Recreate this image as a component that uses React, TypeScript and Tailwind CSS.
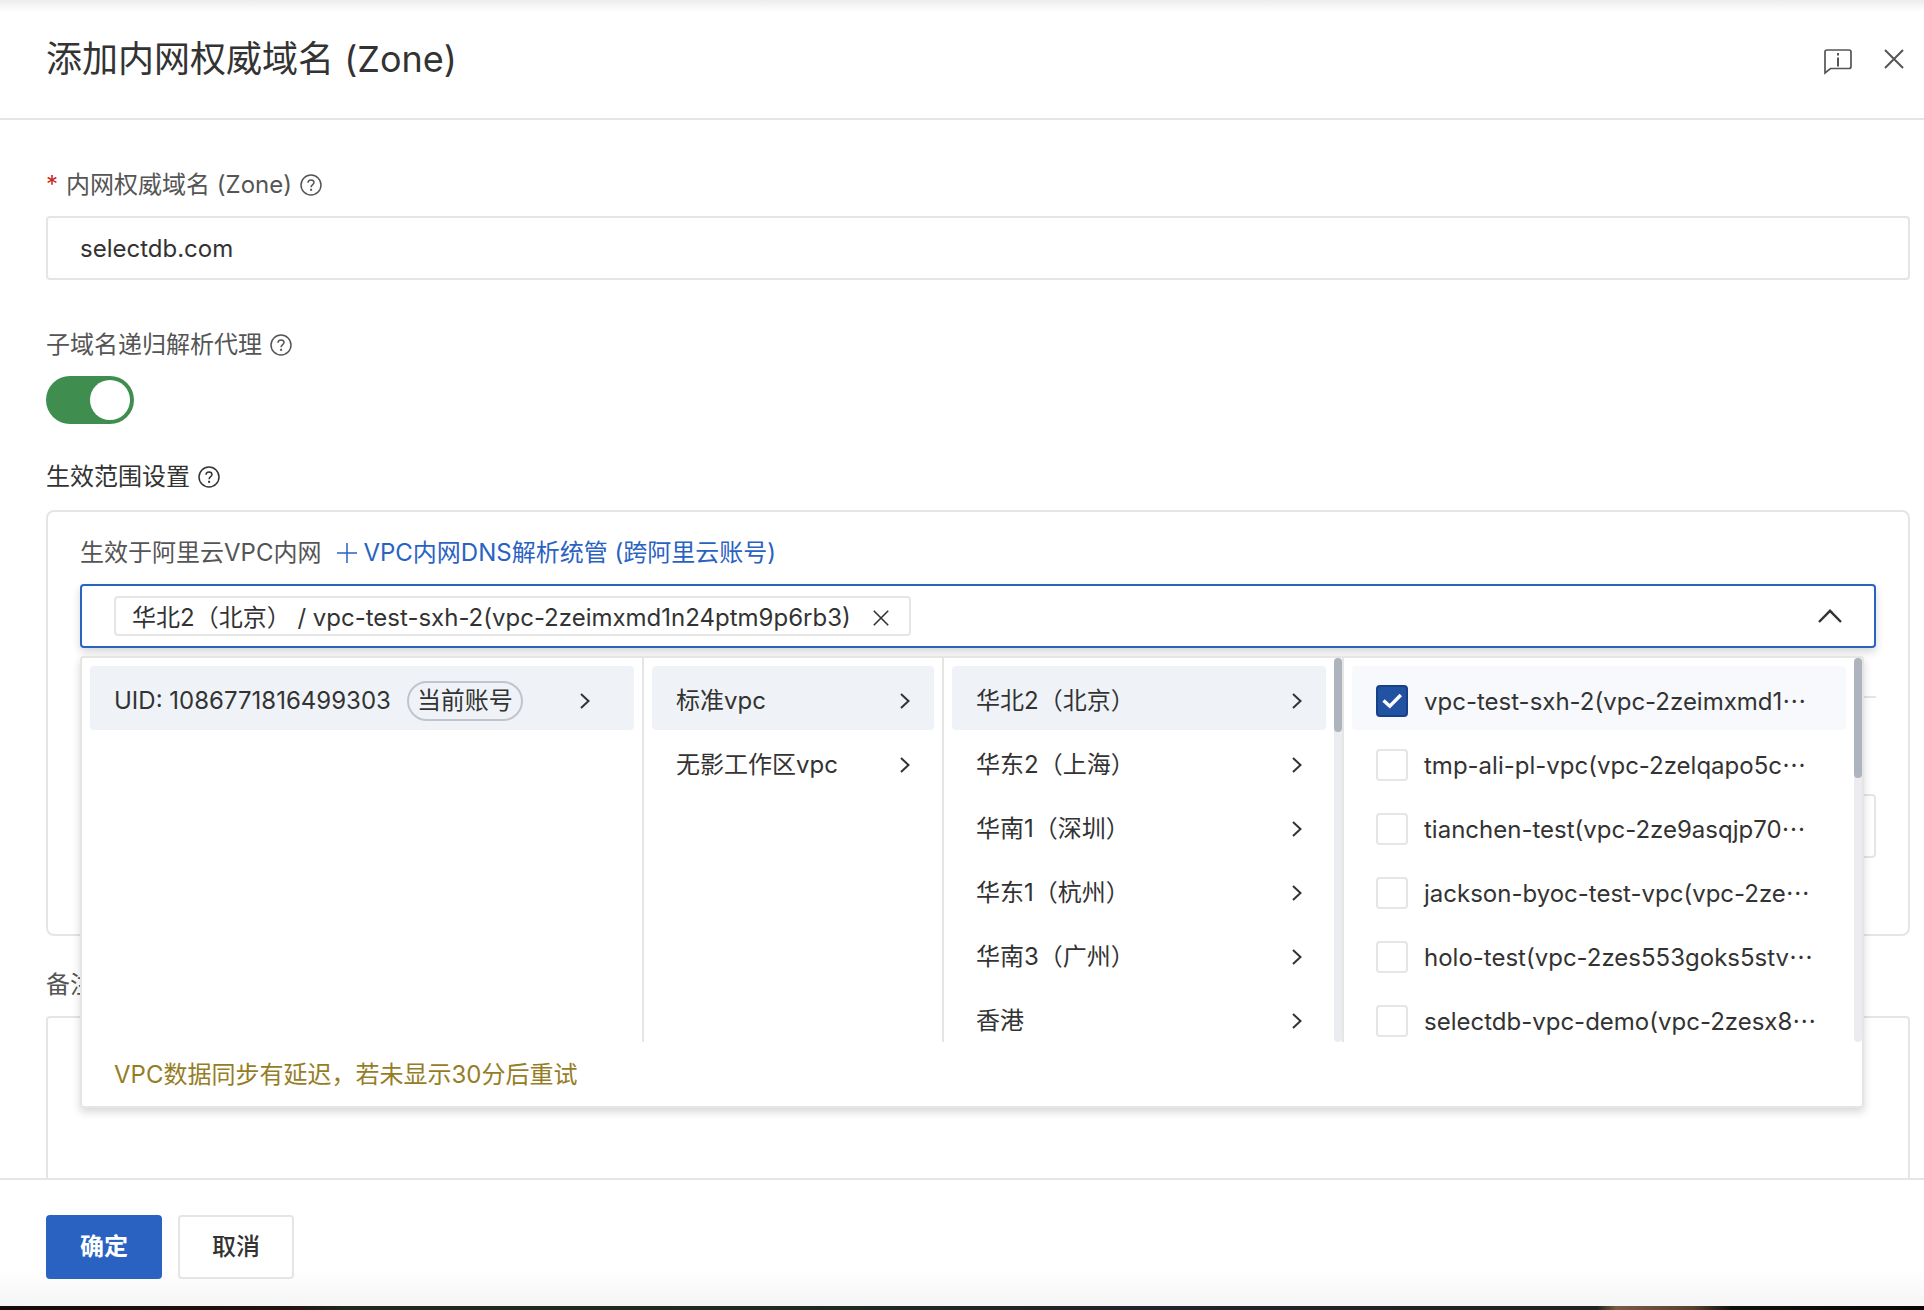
import { useState } from "react";
import type { ReactNode } from "react";

const regions = ["华北2（北京）", "华东2（上海）", "华南1（深圳）", "华东1（杭州）", "华南3（广州）", "香港"];

const vpcs = [
  "vpc-test-sxh-2(vpc-2zeimxmd1",
  "tmp-ali-pl-vpc(vpc-2zelqapo5c",
  "tianchen-test(vpc-2ze9asqjp70",
  "jackson-byoc-test-vpc(vpc-2ze",
  "holo-test(vpc-2zes553goks5stv",
  "selectdb-vpc-demo(vpc-2zesx8",
];

function HelpIcon() {
  return (
    <svg className="size-[22px] shrink-0" viewBox="0 0 22 22" fill="none" stroke="currentColor" strokeWidth="1.5">
      <circle cx="11" cy="11" r="10" />
      <path d="M8 8.800c0-1.700 1.200-2.900 3-2.900s3 1.200 3 2.700c0 2-2.900 2.200-2.900 4.600" />
      <path d="M11.100 14.800v2" strokeWidth="2" />
    </svg>
  );
}

function Chevron() {
  return (
    <svg className="h-4 w-[10px] shrink-0" viewBox="0 0 10 16" fill="none" stroke="#333" strokeWidth="2">
      <path d="M1 1l7.500 7L1 15" />
    </svg>
  );
}

function Cross({ className }: { className: string }) {
  return (
    <svg className={className} viewBox="0 0 20 20" fill="none" stroke="currentColor">
      <path d="M1 1l18 18M19 1L1 19" />
    </svg>
  );
}

function MenuItem({ active, children }: { active?: boolean; children: ReactNode }) {
  return (
    <button
      type="button"
      className={`flex h-16 w-full shrink-0 items-center justify-between rounded px-6 pt-1.5 text-left whitespace-nowrap ${active ? "bg-[#eff3f8]" : ""}`}
    >
      {children}
      <Chevron />
    </button>
  );
}

function Scrollbar({ thumb }: { thumb: string }) {
  return (
    <div className="w-2 shrink-0 rounded-full bg-[#ebecf0]">
      <div className={`w-2 rounded-full bg-[#adb4bd] ${thumb}`} />
    </div>
  );
}

function CascaderMenu() {
  const [checked, setChecked] = useState([vpcs[0]]);

  const toggle = (name: string) =>
    setChecked((prev) => (prev.includes(name) ? prev.filter((v) => v !== name) : [...prev, name]));

  return (
    <div className="absolute top-full right-3 left-0 z-10 mt-2 rounded border-2 border-[#e5e5e5] bg-white text-[#333] shadow-[0_4px_8px_rgba(0,0,0,0.16)]">
      <div className="grid h-96 grid-cols-[562fr_300fr_400fr_518fr] grid-rows-[384px]">
        <div className="min-w-0 border-r-2 border-[#e5e5e5] p-2">
          <button
            type="button"
            className="flex h-16 w-full items-center rounded bg-[#eff3f8] pt-1.5 pr-11 pl-6 whitespace-nowrap"
          >
            <span>UID: 1086771816499303</span>
            <span className="ml-4 h-10 rounded-full border-2 border-[#c1c5cb] px-2 leading-9">当前账号</span>
            <span className="flex-1" />
            <Chevron />
          </button>
        </div>
        <div className="min-w-0 border-r-2 border-[#e5e5e5] p-2">
          <MenuItem active>标准vpc</MenuItem>
          <MenuItem>无影工作区vpc</MenuItem>
        </div>
        <div className="flex min-w-0 border-r-2 border-[#e5e5e5]">
          <div className="min-w-0 flex-1 overflow-hidden p-2">
            {regions.map((region, i) => (
              <MenuItem key={region} active={i === 0}>
                {region}
              </MenuItem>
            ))}
          </div>
          <Scrollbar thumb="h-[74px]" />
        </div>
        <div className="flex min-w-0">
          <div className="min-w-0 flex-1 overflow-hidden p-2">
            {vpcs.map((name, i) => (
              <label
                key={name}
                className={`flex h-16 items-center gap-4 rounded px-6 pt-1.5 whitespace-nowrap ${i === 0 ? "bg-[#f7f9fc]" : ""}`}
              >
                <span className="relative size-8 shrink-0">
                  <input
                    type="checkbox"
                    checked={checked.includes(name)}
                    onChange={() => toggle(name)}
                    className="peer block size-8 appearance-none rounded border-2 border-[#e5e5e5] bg-white checked:border-[#164088] checked:bg-[#2252a2]"
                  />
                  <svg
                    className="pointer-events-none absolute inset-0 hidden size-8 peer-checked:block"
                    viewBox="0 0 32 32"
                    fill="none"
                    stroke="#fff"
                    strokeWidth="3.500"
                  >
                    <path d="M7.500 15.500l6.300 5.700L24.800 10" />
                  </svg>
                </span>
                <span>
                  {name}
                  <span lang="zh-CN" className="font-[family-name:'Noto_Sans_CJK_SC',sans-serif]">
                    …
                  </span>
                </span>
              </label>
            ))}
          </div>
          <Scrollbar thumb="h-[120px]" />
        </div>
      </div>
      <p className="flex h-16 items-center px-8 pt-0.5 text-[#957d26]">VPC数据同步有延迟，若未显示30分后重试</p>
    </div>
  );
}

export default function App() {
  const [zone, setZone] = useState("selectdb.com");
  const [proxy, setProxy] = useState(true);

  return (
    <div className="flex h-screen flex-col overflow-hidden bg-white font-[Inter,'Noto_Sans_CJK_SC',sans-serif] text-2xl leading-9 text-[#555]">
      <header className="flex h-[120px] shrink-0 items-center justify-between border-b-2 border-[#e5e5e5] bg-linear-to-b from-[#ececec] to-white to-10% pr-5 pl-[46px]">
        <h1 className="text-4xl leading-[54px] text-[#333]">添加内网权威域名 (Zone)</h1>
        <div className="flex items-start gap-8 pt-1.5">
          <button type="button" aria-label="反馈">
            <svg className="h-[26px] w-7" viewBox="0 0 28 26" fill="none" stroke="currentColor" strokeWidth="1.700">
              <path d="M1 24V3q0-2 2-2h22q2 0 2 2v14.500q0 2-2 2H6.500z" />
              <path d="M14 8.500v9M14 4v2.500" strokeWidth="2" />
            </svg>
          </button>
          <button type="button" aria-label="关闭">
            <Cross className="size-5 stroke-2" />
          </button>
        </div>
      </header>

      <main className="min-h-0 flex-1 overflow-hidden pt-[47px] pr-[14px] pl-[46px]">
        <div className="flex items-center gap-2">
          <label htmlFor="zone">
            <span className="mr-2 text-[#c8281e]">*</span>内网权威域名 (Zone)
          </label>
          <HelpIcon />
        </div>
        <input
          id="zone"
          value={zone}
          onChange={(e) => setZone(e.target.value)}
          className="mt-[13px] block h-16 w-full rounded border-2 border-[#e5e5e5] px-8 text-[#333] outline-none"
        />

        <div className="mt-[47px] flex items-center gap-2">
          <label htmlFor="proxy">子域名递归解析代理</label>
          <HelpIcon />
        </div>
        <div className="relative mt-[13px] h-12 w-[88px]">
          <input
            id="proxy"
            type="checkbox"
            role="switch"
            checked={proxy}
            onChange={(e) => setProxy(e.target.checked)}
            className="peer block h-12 w-[88px] appearance-none rounded-full bg-[#c1c1c1] checked:bg-[#3f8e50]"
          />
          <span className="pointer-events-none absolute top-1 left-1 size-10 rounded-full bg-white peer-checked:left-11" />
        </div>

        <h2 className="mt-[35px] flex items-center gap-2 text-[#333]">
          生效范围设置
          <HelpIcon />
        </h2>
        <section className="mt-[15px] h-[426px] rounded-lg border-2 border-[#e5e5e5] px-8 pt-[23px]">
          <div className="flex items-center">
            <span>生效于阿里云VPC内网</span>
            <a href="#" className="ml-4 flex items-center gap-[6px] text-[#2a62c2]">
              <svg className="size-5" viewBox="0 0 20 20" stroke="currentColor" strokeWidth="1.500">
                <path d="M10 0v20M0 10h20" />
              </svg>
              VPC内网DNS解析统管 (跨阿里云账号)
            </a>
          </div>
          <div className="relative mt-[13px]">
            <div className="flex h-16 items-center justify-between rounded border-2 border-[#2a62c2] bg-white px-8 text-[#333] shadow-[0_4px_8px_rgba(0,0,0,0.16)]">
              <div className="flex h-10 items-center gap-[22px] rounded border-2 border-[#e5e5e5] pt-1 pr-5 pl-4">
                <span>华北2（北京） / vpc-test-sxh-2(vpc-2zeimxmd1n24ptm9p6rb3)</span>
                <button type="button" aria-label="移除">
                  <Cross className="block size-4 stroke-2" />
                </button>
              </div>
              <button type="button" aria-label="收起">
                <svg className="h-[14px] w-6" viewBox="0 0 24 14" fill="none" stroke="#333" strokeWidth="2.400">
                  <path d="M1 13L12 1.800 23 13" />
                </svg>
              </button>
            </div>
            <CascaderMenu />
          </div>
          <div className="mt-12 border-t-2 border-[#e5e5e5]" />
          <div className="mt-24 h-16 rounded border-2 border-[#e5e5e5]" />
        </section>

        <label htmlFor="remark" className="mt-[31px] block">
          备注
        </label>
        <textarea
          id="remark"
          className="mt-[13px] block h-[200px] w-full resize-none rounded border-2 border-[#e5e5e5] px-8 outline-none"
        />
      </main>

      <footer className="flex h-32 shrink-0 items-start gap-4 border-t-2 border-[#e5e5e5] bg-linear-to-b from-white from-70% to-[#f5f5f5] px-[46px] pt-[35px] font-medium">
        <button type="button" className="h-16 w-[116px] rounded bg-[#2a62c2] font-bold text-white">
          确定
        </button>
        <button type="button" className="h-16 w-[116px] rounded border-2 border-[#e5e5e5] bg-white text-[#333]">
          取消
        </button>
      </footer>
      <div className="h-1 shrink-0 bg-[linear-gradient(to_right,#150b0a_0%,#24120d_15%,#1c291c_18%,#1f2a20_40%,#222228_60%,#20231f_83%,#7a5a45_84%,#5a4030_88%,#10100c_90%,#0a0707_100%)]" />
    </div>
  );
}
